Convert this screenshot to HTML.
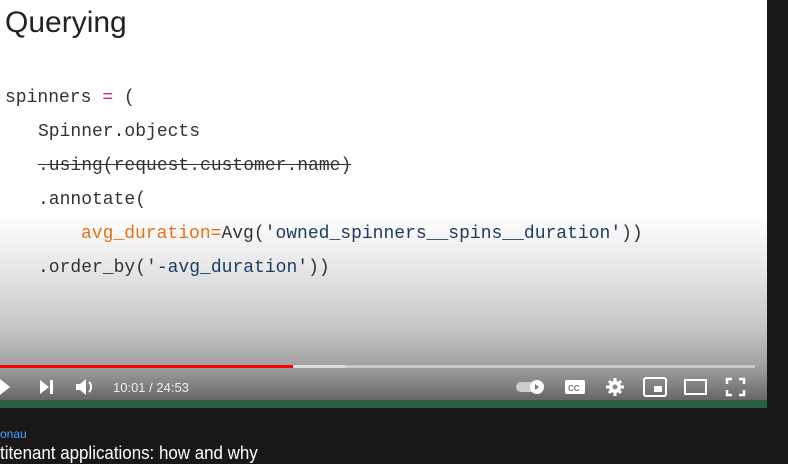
<!DOCTYPE html><html><head><style>
body{margin:0;width:788px;height:461px;background:#181818;overflow:hidden;position:relative;font-family:"Liberation Sans",sans-serif}
#v{position:absolute;left:0;top:0;width:767px;height:408px;background:linear-gradient(#fff 0,#fff 215px,#e6e6e6 270px,#c4c4c4 330px,#a8a8a8 360px,#8a8a8a 380px,#666 400px)}
h1{position:absolute;left:5px;top:6px;margin:0;font-weight:normal;font-size:30px;color:#222}
.c{position:absolute;font-family:"Liberation Mono",monospace;font-size:18px;color:#333;white-space:pre;line-height:20px}
.o{color:#e8701a}.s{color:#1d3b60}.r{color:#d9304a}
.i{position:absolute}
</style></head><body>
<div id="v">
<h1>Querying</h1>
<div class="c" style="left:5px;top:88px">spinners <span class="r">=</span> (</div>
<div class="c" style="left:38px;top:122px">Spinner.objects</div>
<div class="c" style="left:38px;top:156px;text-decoration:line-through">.using(request.customer.name)</div>
<div class="c" style="left:38px;top:190px">.annotate(</div>
<div class="c" style="left:81px;top:224px"><span class="o">avg_duration=</span>Avg(<span class="s">'owned_spinners__spins__duration'</span>))</div>
<div class="c" style="left:38px;top:258px">.order_by(<span class="s">'-avg_duration'</span>))</div>
<div class="i" style="left:0;top:365px;width:755px;height:3px;background:rgba(230,230,230,.6)"></div>
<div class="i" style="left:0;top:365px;width:345px;height:3px;background:#ddd"></div>
<div class="i" style="left:0;top:365px;width:293px;height:3px;background:#f00"></div>
<div class="i" style="left:0;top:400px;width:767px;height:8px;background:#2c5e42"></div>
<svg class="i" style="left:0;top:375px" width="767" height="25" viewBox="0 0 767 25" fill="#fff">
<path d="M0 4L10 12L0 20Z"/>
<path d="M40 5L49 12L40 19Z"/><rect x="50" y="5" width="3" height="14"/>
<path d="M76 9h4l6-5v16l-6-5h-4z"/><path d="M89 7a7 7 0 0 1 0 10" stroke="#fff" stroke-width="2" fill="none"/>
<text x="113" y="17" font-size="13" fill="#eee" font-family="Liberation Sans">10:01 / 24:53</text>
<rect x="516" y="7" width="24" height="10" rx="5" fill="#ccc"/><circle cx="537" cy="12" r="7"/><path d="M535 9l4 3l-4 3z" fill="#777"/>
<rect x="565" y="5" width="20" height="14" rx="2"/><text x="568" y="16" font-size="8" font-weight="bold" fill="#777" font-family="Liberation Sans">CC</text>
<circle cx="615" cy="12" r="6"/><g stroke="#fff" stroke-width="3"><path d="M615 3v18M606 12h18M609 6l12 12M621 6l-12 12"/></g><circle cx="615" cy="12" r="2.5" fill="#888"/>
<rect x="644" y="3" width="22" height="18" rx="2" fill="none" stroke="#fff" stroke-width="2"/><rect x="654" y="11" width="8" height="6"/>
<rect x="685" y="5" width="21" height="14" fill="none" stroke="#fff" stroke-width="2"/>
<g fill="none" stroke="#fff" stroke-width="2.5"><path d="M727 9V4h5M739 4h5v5M744 15v5h-5M732 20h-5v-5"/></g>
</svg>
</div>
<div class="i" style="left:0;top:427px;font-size:12px;color:#3ea6ff">onau</div>
<div class="i" style="left:0;top:443px;font-size:18px;color:#fff;transform:scaleX(0.94);transform-origin:0 0">titenant applications: how and why</div>
</body></html>
